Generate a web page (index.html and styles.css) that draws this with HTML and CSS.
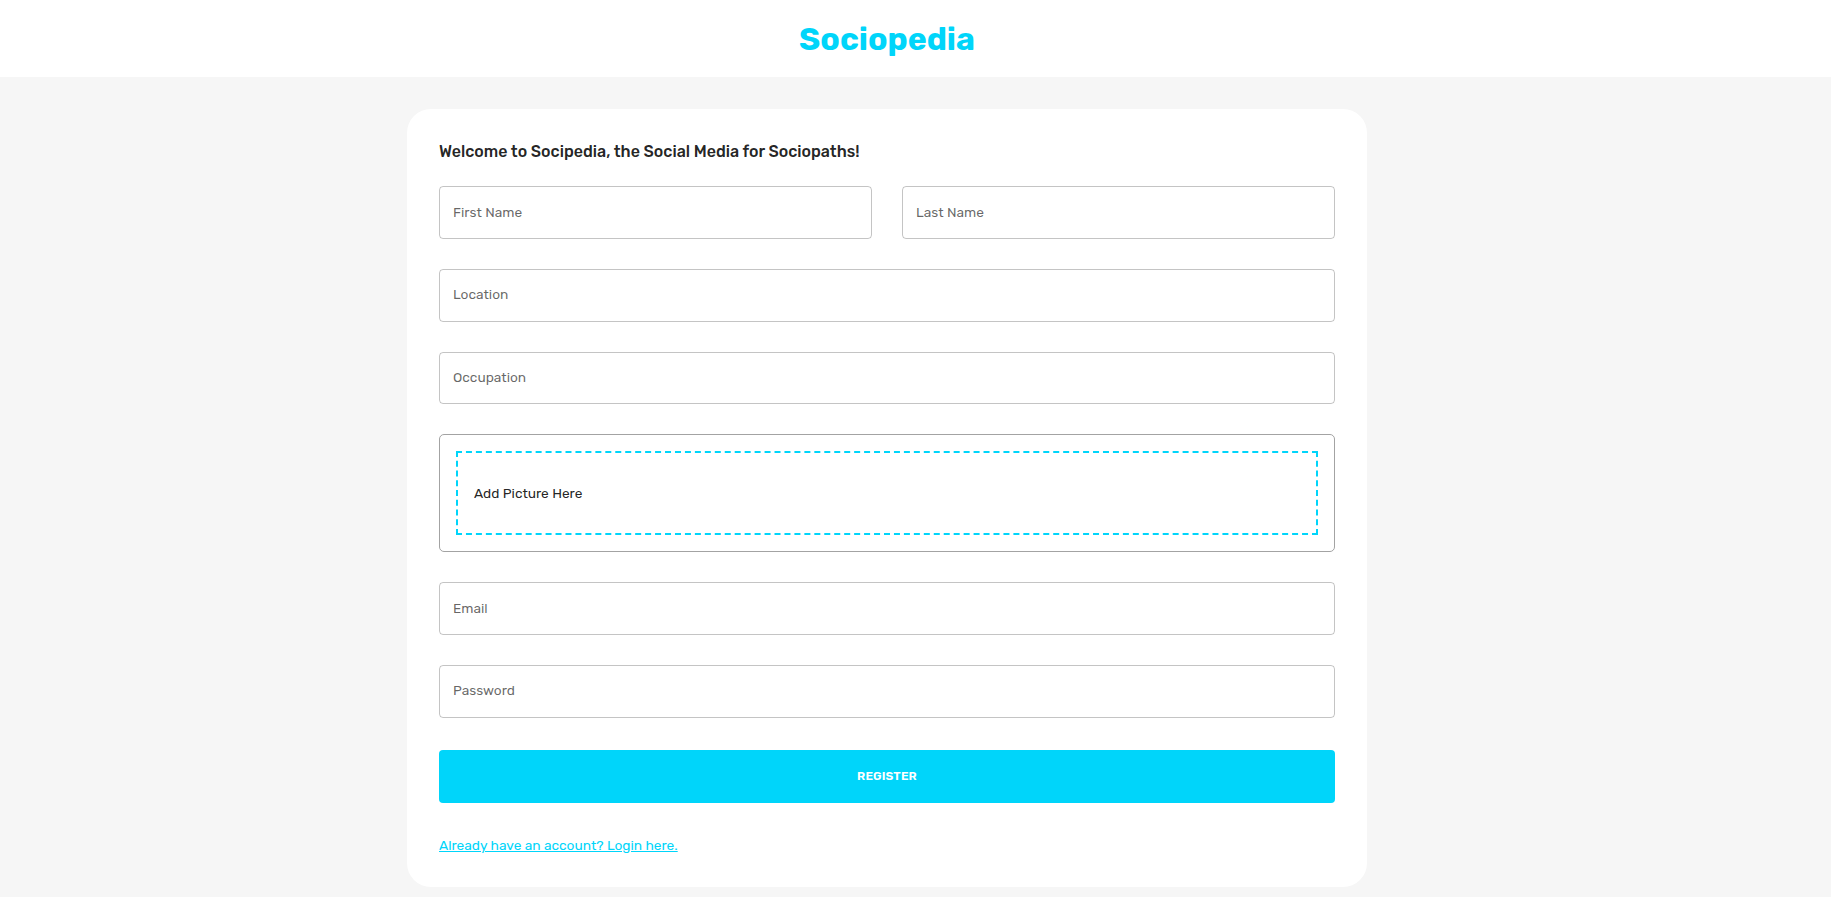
FILE: index.html
```html
<!DOCTYPE html>
<html lang="en">
<head>
<meta charset="utf-8">
<title>Sociopedia</title>
<link rel="stylesheet" href="styles.css">
</head>
<body>
<header class="topbar">
  <div class="topbar-inner">
    <h1 class="brand">Sociopedia</h1>
  </div>
</header>
<main class="page">
  <section class="card">
    <h5 class="welcome">Welcome to Socipedia, the Social Media for Sociopaths!</h5>
    <form class="form">
      <div class="field"><span class="label">First Name</span></div>
      <div class="field"><span class="label">Last Name</span></div>
      <div class="field span2"><span class="label">Location</span></div>
      <div class="field span2"><span class="label">Occupation</span></div>
      <div class="picture span2">
        <div class="dropzone"><p>Add Picture Here</p></div>
      </div>
      <div class="field span2"><span class="label">Email</span></div>
      <div class="field span2"><span class="label">Password</span></div>
    </form>
    <button class="register" type="button">REGISTER</button>
    <a class="login-link" href="#">Already have an account? Login here.</a>
  </section>
</main>
</body>
</html>
```

FILE: styles.css
```css
* { box-sizing: border-box; }
html, body {
  margin: 0;
  padding: 0;
}
body {
  background: #F6F6F6;
  font-family: "Rubik", "Inter", "Roboto", sans-serif;
  color: rgba(0,0,0,0.87);
  min-height: 897px;
}
.topbar {
  background: #FFFFFF;
  height: 77px;
}
.topbar-inner {
  width: 1774px;
  height: 100%;
  display: flex;
  align-items: center;
  justify-content: center;
}
.brand {
  margin: 0;
  font-size: 32px;
  font-weight: 700;
  color: #00D5FA;
  line-height: 1;
  letter-spacing: 0;
}
.page {
  width: 1774px;
  padding-top: 32px;
}
.card {
  width: 960px;
  margin: 0 auto;
  background: #FFFFFF;
  border-radius: 24px;
  padding: 32px;
}
.welcome {
  margin: 1px 0 25px 0;
  font-size: 16px;
  font-weight: 500;
  line-height: 1.2;
}
.form {
  display: grid;
  grid-template-columns: 1fr 1fr;
  gap: 30px;
}
.span2 { grid-column: span 2; }
.field {
  height: 52.7px;
  border: 1px solid rgba(0,0,0,0.23);
  border-radius: 4px;
  display: flex;
  align-items: center;
  padding: 0 13px 2px;
}
.label {
  font-size: 13.71px;
  color: rgba(0,0,0,0.6);
}
.picture {
  border: 1px solid #A3A3A3;
  border-radius: 5px;
  padding: 16px;
}
.dropzone {
  border: 2px dashed #00D5FA;
  padding: 16px;
}
.dropzone p {
  margin: 13.71px 0;
  font-size: 13.71px;
  line-height: 1.5;
}
.register {
  display: block;
  width: 100%;
  margin: 32px 0;
  padding: 16px;
  border: none;
  border-radius: 4px;
  background: #00D5FA;
  color: #FFFFFF;
  font-family: inherit;
  font-size: 12px;
  font-weight: 600;
  line-height: 1.75;
  letter-spacing: 0.01em;
}
.login-link {
  display: block;
  color: #00D5FA;
  text-decoration: underline;
  font-size: 13.71px;
  line-height: 1.5;
  width: max-content;
}
```
